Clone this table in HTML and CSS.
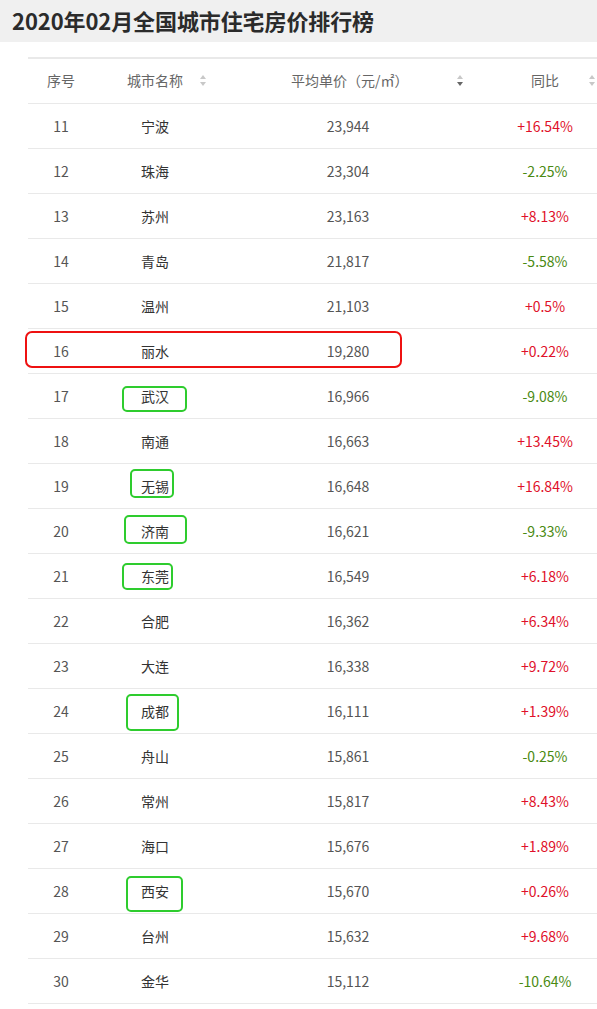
FILE: index.html
```html
<!DOCTYPE html>
<html lang="zh-CN">
<head>
  <meta charset="UTF-8">
  <title>2020年02月全国城市住宅房价排行榜</title>
  <link rel="stylesheet" href="styles.css">
</head>
<body>
  <div class="title-bar">
    <h1>2020年02月全国城市住宅房价排行榜</h1>
  </div>

  <div class="board">
    <div class="rank-table">
      <div class="row head">
        <div class="c1">序号</div>
        <div class="c2 sortable">城市名称<svg class="sort" viewBox="0 0 6 11"><path d="M3 0L6 4H0z" fill="#c8c8c8"/><path d="M3 11L6 7H0z" fill="#c8c8c8"/></svg></div>
        <div class="c3 sortable">平均单价（元/㎡）<svg class="sort" viewBox="0 0 6 11"><path d="M3 0L6 4H0z" fill="#c8c8c8"/><path d="M3 11L6 7H0z" fill="#666"/></svg></div>
        <div class="c4 sortable">同比<svg class="sort" viewBox="0 0 6 11"><path d="M3 0L6 4H0z" fill="#c8c8c8"/><path d="M3 11L6 7H0z" fill="#c8c8c8"/></svg></div>
      </div>
      <div class="row"><div class="c1">11</div><div class="c2">宁波</div><div class="c3">23,944</div><div class="c4 up">+16.54%</div></div>
      <div class="row"><div class="c1">12</div><div class="c2">珠海</div><div class="c3">23,304</div><div class="c4 down">-2.25%</div></div>
      <div class="row"><div class="c1">13</div><div class="c2">苏州</div><div class="c3">23,163</div><div class="c4 up">+8.13%</div></div>
      <div class="row"><div class="c1">14</div><div class="c2">青岛</div><div class="c3">21,817</div><div class="c4 down">-5.58%</div></div>
      <div class="row"><div class="c1">15</div><div class="c2">温州</div><div class="c3">21,103</div><div class="c4 up">+0.5%</div></div>
      <div class="row"><div class="c1">16</div><div class="c2">丽水</div><div class="c3">19,280</div><div class="c4 up">+0.22%</div></div>
      <div class="row"><div class="c1">17</div><div class="c2">武汉</div><div class="c3">16,966</div><div class="c4 down">-9.08%</div></div>
      <div class="row"><div class="c1">18</div><div class="c2">南通</div><div class="c3">16,663</div><div class="c4 up">+13.45%</div></div>
      <div class="row"><div class="c1">19</div><div class="c2">无锡</div><div class="c3">16,648</div><div class="c4 up">+16.84%</div></div>
      <div class="row"><div class="c1">20</div><div class="c2">济南</div><div class="c3">16,621</div><div class="c4 down">-9.33%</div></div>
      <div class="row"><div class="c1">21</div><div class="c2">东莞</div><div class="c3">16,549</div><div class="c4 up">+6.18%</div></div>
      <div class="row"><div class="c1">22</div><div class="c2">合肥</div><div class="c3">16,362</div><div class="c4 up">+6.34%</div></div>
      <div class="row"><div class="c1">23</div><div class="c2">大连</div><div class="c3">16,338</div><div class="c4 up">+9.72%</div></div>
      <div class="row"><div class="c1">24</div><div class="c2">成都</div><div class="c3">16,111</div><div class="c4 up">+1.39%</div></div>
      <div class="row"><div class="c1">25</div><div class="c2">舟山</div><div class="c3">15,861</div><div class="c4 down">-0.25%</div></div>
      <div class="row"><div class="c1">26</div><div class="c2">常州</div><div class="c3">15,817</div><div class="c4 up">+8.43%</div></div>
      <div class="row"><div class="c1">27</div><div class="c2">海口</div><div class="c3">15,676</div><div class="c4 up">+1.89%</div></div>
      <div class="row"><div class="c1">28</div><div class="c2">西安</div><div class="c3">15,670</div><div class="c4 up">+0.26%</div></div>
      <div class="row"><div class="c1">29</div><div class="c2">台州</div><div class="c3">15,632</div><div class="c4 up">+9.68%</div></div>
      <div class="row"><div class="c1">30</div><div class="c2">金华</div><div class="c3">15,112</div><div class="c4 down">-10.64%</div></div>
    </div>

    <!-- hand-drawn highlight marks over the table -->
    <div class="mark red lishui"></div>
    <div class="mark green wuhan"></div>
    <div class="mark green wuxi"></div>
    <div class="mark green jinan"></div>
    <div class="mark green dongguan"></div>
    <div class="mark green chengdu"></div>
    <div class="mark green xian"></div>
  </div>
</body>
</html>
```

FILE: styles.css
```css
body {
  margin: 0;
  background: #fff;
  font-family: "Microsoft YaHei", "Noto Sans CJK SC", sans-serif;
  color: #555;
  overflow: hidden;
}

.title-bar {
  background: #f0f0f0;
  height: 42px;
  padding-left: 12px;
}

.title-bar h1 {
  margin: 0;
  font-size: 22px;
  line-height: 40px;
  font-weight: bold;
  color: #2b2b2b;
  letter-spacing: -0.1px;
}

.board {
  position: relative;
  padding-top: 15px;
}

.rank-table {
  margin-left: 28px;
  width: 582px;
  border-top: 2px solid #e9e9e9;
}

.row {
  display: grid;
  grid-template-columns: 66px 122px 264px 130px;
  height: 44px;
  align-items: center;
  border-bottom: 1px solid #e9e9e9;
  font-size: 14px;
}

.row > div {
  text-align: center;
}

.row .c2 {
  color: #333;
}

.row.head {
  color: #666;
  font-size: 14px;
  padding-bottom: 2px;
  height: 42px;
}

.head .sortable {
  display: flex;
  align-items: center;
  text-align: left;
}

.head .c2 {
  padding-left: 33px;
  color: #666;
}

.head .c2 .sort {
  margin-left: 17px;
}

.head .c3 {
  padding-left: 75px;
}

.head .c3 .sort {
  margin-left: 48px;
}

.head .c4 {
  padding-left: 51px;
}

.head .c4 .sort {
  margin-left: 30px;
}

.sort {
  width: 6px;
  height: 11px;
  flex-shrink: 0;
}

.up {
  color: #e0102a;
}

.down {
  color: #4a8a12;
}

.mark {
  position: absolute;
  box-sizing: border-box;
  border: 2px solid;
}

.mark.red {
  border-color: #ee1111;
  border-radius: 7px;
}

.mark.green {
  border-color: #2ecc2e;
  border-radius: 5px;
}

.lishui   { left: 25px;  top: 289px; width: 377px; height: 37px; }
.wuhan    { left: 122px; top: 344px; width: 65px;  height: 26px; }
.wuxi     { left: 130px; top: 427px; width: 44px;  height: 29px; }
.jinan    { left: 124px; top: 473px; width: 63px;  height: 29px; }
.dongguan { left: 122px; top: 521px; width: 51px;  height: 27px; }
.chengdu  { left: 126px; top: 652px; width: 53px;  height: 37px; }
.xian     { left: 126px; top: 834px; width: 57px;  height: 36px; }
```
